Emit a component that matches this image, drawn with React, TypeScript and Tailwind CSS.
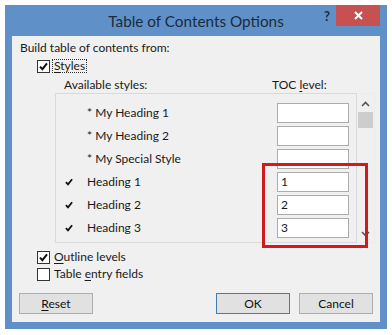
import React from "react";

type Row = { name: string; level: string; used: boolean };

const rows: Row[] = [
  { name: "* My Heading 1", level: "", used: false },
  { name: "* My Heading 2", level: "", used: false },
  { name: "* My Special Style", level: "", used: false },
  { name: "Heading 1", level: "1", used: true },
  { name: "Heading 2", level: "2", used: true },
  { name: "Heading 3", level: "3", used: true },
];

function Tick({ size = 9 }: { size?: number }) {
  return (
    <svg width={size} height={size} viewBox="0 0 9 9">
      <path d="M1 4.6 L3.4 7.2 L8 1.4" stroke="#111" strokeWidth="2" fill="none" />
    </svg>
  );
}

function CheckBox({ checked }: { checked?: boolean }) {
  return (
    <span className="w-[13px] h-[13px] border border-[#333] bg-white flex items-center justify-center shrink-0">
      {checked && <Tick />}
    </span>
  );
}

function Button({ children, primary }: { children: React.ReactNode; primary?: boolean }) {
  return (
    <div
      className={
        "w-[74px] h-[21px] flex items-center justify-center bg-[#e1e1e1] border text-[#111] " +
        (primary ? "border-[#3c7fb1]" : "border-[#adadad]")
      }
    >
      {children}
    </div>
  );
}

export default function App() {
  return (
    <div className="relative w-[392px] h-[335px] bg-white pt-[5px] pl-[5px] font-['Lato',sans-serif] text-[12px] leading-[16px] text-[#1a1a1a]">
      <div className="w-[382px] h-[324px] bg-[#5f91c8] flex flex-col">
        <div className="h-[31px] grid grid-cols-[1fr_auto_1fr]">
          <div />
          <div className="text-[15.3px] leading-[20px] pt-[6px] text-[#1c2b3c]">Table of Contents Options</div>
          <div className="flex justify-end items-start pr-[7px]">
            <span className="text-[13px] leading-[18px] font-bold text-[#1c2b3c] mt-[2px] mr-[6px]">?</span>
            <div className="w-[44px] h-[21px] bg-[#c75050] flex items-center justify-center">
              <svg width="9" height="9" viewBox="0 0 9 9">
                <path d="M1 1 L8 8 M8 1 L1 8" stroke="#fff" strokeWidth="2" />
              </svg>
            </div>
          </div>
        </div>

        <div className="mx-[7px] h-[286px] bg-[#f0f0f0] flex flex-col">
          <div className="mt-[4px] ml-[8px] h-[16px]">Build table of contents from:</div>

          <div className="mt-[2px] ml-[25px] h-[16px] flex items-center gap-[2px]">
            <CheckBox checked />
            <span className="border border-dotted border-[#333] px-[1px] leading-[12px]">
              <span className="underline underline-offset-2">S</span>tyles
            </span>
          </div>

          <div className="mt-[3px] h-[16px] flex">
            <span className="ml-[52px] w-[208px]">Available styles:</span>
            <span>
              TOC <span className="underline underline-offset-2">l</span>evel:
            </span>
          </div>

          <div className="ml-[43px] w-[320px] h-[150px] flex">
            <div className="w-[302px] border border-[#d9d9d9] pt-[7px]">
              {rows.map((r) => (
                <div key={r.name} className="h-[23px] flex items-center">
                  <span className="w-[31px] pl-[9px] flex items-center">{r.used && <Tick size={8} />}</span>
                  <span className="w-[190px]">{r.name}</span>
                  <span className="w-[72px] h-[20px] bg-white border border-[#acacac] pl-[3px] flex items-center">
                    {r.level}
                  </span>
                </div>
              ))}
            </div>
            <div className="w-[18px] border-y border-r border-[#ececec] flex flex-col items-center">
              <svg className="mt-[7px]" width="9" height="6" viewBox="0 0 9 6">
                <path d="M1 5 L4.5 1.5 L8 5" stroke="#555" strokeWidth="1.6" fill="none" />
              </svg>
              <div className="mt-[5px] w-[15px] h-[16px] bg-[#cdcdcd]" />
              <div className="flex-1" />
              <svg className="mb-[5px]" width="9" height="6" viewBox="0 0 9 6">
                <path d="M1 1 L4.5 4.5 L8 1" stroke="#555" strokeWidth="1.6" fill="none" />
              </svg>
            </div>
          </div>

          <div className="mt-[6px] ml-[25px] h-[16px] flex items-center gap-[4px]">
            <CheckBox checked />
            <span>
              <span className="underline underline-offset-2">O</span>utline levels
            </span>
          </div>
          <div className="mt-[1px] ml-[25px] h-[16px] flex items-center gap-[4px]">
            <CheckBox />
            <span>
              Table <span className="underline underline-offset-2">e</span>ntry fields
            </span>
          </div>

          <div className="mt-[11px] px-[7px] flex">
            <Button>
              <span>
                <span className="underline underline-offset-2">R</span>eset
              </span>
            </Button>
            <div className="flex-1" />
            <Button primary>OK</Button>
            <div className="w-[9px]" />
            <Button>Cancel</Button>
          </div>
        </div>
      </div>

      <div className="absolute left-[262px] top-[163px] w-[106px] h-[85px] border-[3px] border-[#d11a1f]" />
    </div>
  );
}
